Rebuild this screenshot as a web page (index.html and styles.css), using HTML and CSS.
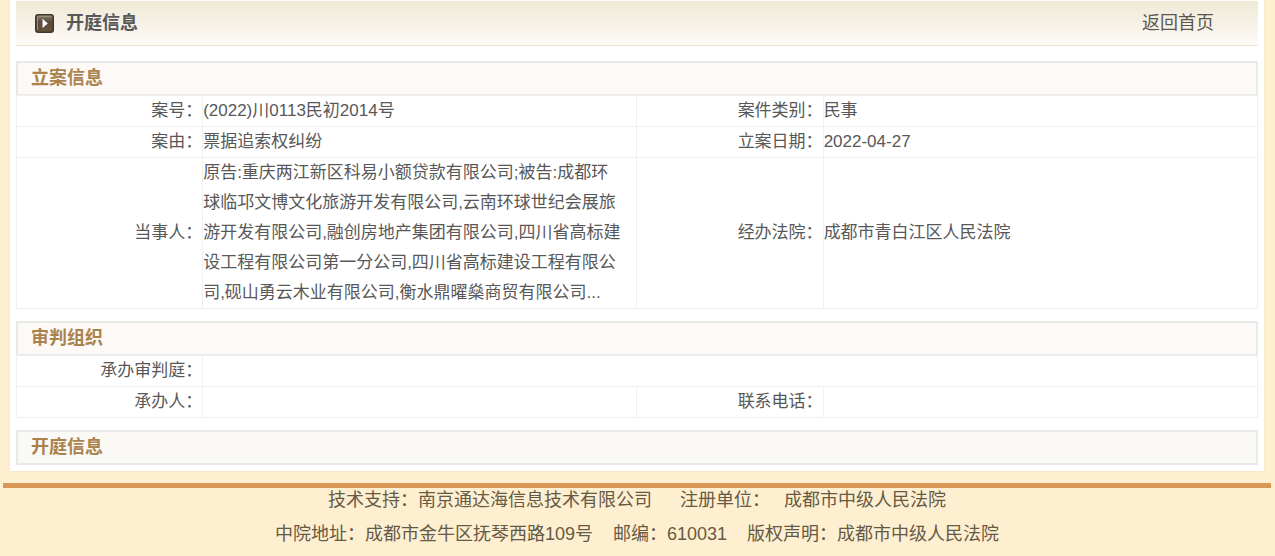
FILE: index.html
```html
<!DOCTYPE html>
<html lang="zh-CN">
<head>
<meta charset="utf-8">
<title>开庭信息</title>
<link rel="stylesheet" href="styles.css">
</head>
<body>
<main class="panel">
  <header class="page-head">
    <svg class="head-icon" width="19" height="19" viewBox="0 0 19 19" aria-hidden="true">
      <defs><linearGradient id="tile" x1="0" y1="0" x2="0" y2="1"><stop offset="0" stop-color="#8d8172"/><stop offset=".4" stop-color="#5c4b3a"/><stop offset="1" stop-color="#67513b"/></linearGradient></defs>
      <rect x=".75" y=".75" width="17.5" height="17.5" rx="2.5" fill="url(#tile)" stroke="#41362b" stroke-width="1.5"/>
      <path d="M2.5 16V3.5Q2.5 2.3 4 2.3H16" fill="none" stroke="#a79c8c" stroke-width=".8"/>
      <path d="M7.5 4.8V14L12.8 9.4Z" fill="#fff"/>
    </svg>
    <h1 class="head-title">开庭信息</h1>
    <a class="home-link" href="#">返回首页</a>
  </header>

  <section class="block">
    <h2 class="block-title">立案信息</h2>
    <table class="info">
      <colgroup><col class="col-label"><col class="col-value"><col class="col-label"><col class="col-value"></colgroup>
      <tr><th scope="row">案号：</th><td>(2022)川0113民初2014号</td><th scope="row">案件类别：</th><td>民事</td></tr>
      <tr><th scope="row">案由：</th><td>票据追索权纠纷</td><th scope="row">立案日期：</th><td>2022-04-27</td></tr>
      <tr>
        <th scope="row">当事人：</th>
        <td>原告:重庆两江新区科易小额贷款有限公司;被告:成都环<br>球临邛文博文化旅游开发有限公司,云南环球世纪会展旅<br>游开发有限公司,融创房地产集团有限公司,四川省高标建<br>设工程有限公司第一分公司,四川省高标建设工程有限公<br>司,砚山勇云木业有限公司,衡水鼎曜燊商贸有限公司...</td>
        <th scope="row">经办法院：</th>
        <td>成都市青白江区人民法院</td>
      </tr>
    </table>
  </section>

  <section class="block">
    <h2 class="block-title">审判组织</h2>
    <table class="info">
      <colgroup><col class="col-label"><col class="col-value"><col class="col-label"><col class="col-value"></colgroup>
      <tr><th scope="row">承办审判庭：</th><td colspan="3"></td></tr>
      <tr><th scope="row">承办人：</th><td></td><th scope="row">联系电话：</th><td></td></tr>
    </table>
  </section>

  <section class="block">
    <h2 class="block-title block-title-plain">开庭信息</h2>
  </section>
</main>

<footer class="footer">
  <p class="footer-line footer-line-first"><span>技术支持：南京通达海信息技术有限公司</span><span>注册单位：<span class="owner">成都市中级人民法院</span></span></p>
  <p class="footer-line"><span>中院地址：成都市金牛区抚琴西路109号</span><span>邮编：610031</span><span>版权声明：成都市中级人民法院</span></p>
</footer>
</body>
</html>
```
FILE: styles.css
```css
* {
  box-sizing: border-box;
}

body {
  margin: 0;
  background: #feefd0;
  color: #585858;
  font-family: "Liberation Sans", "Noto Sans CJK SC", sans-serif;
  font-size: 17px;
  line-height: 30px;
}

.panel {
  margin: 0 11px 0 10px;
  padding: 1px 6px 6px;
  background: #fff;
  box-shadow: 0 0 2px #eadfc0;
}

.page-head {
  display: flex;
  align-items: center;
  height: 45px;
  padding: 0 44px 0 19px;
  border-bottom: 1px solid #ece3c8;
  background: linear-gradient(#efe9d6, #fefaf7);
}

.head-icon {
  margin-top: 1px;
}

.head-title {
  margin: 0 0 0 12px;
  font-size: 18px;
  font-weight: bold;
}

.home-link {
  margin-left: auto;
  color: #5c574c;
  font-size: 18px;
  text-decoration: none;
}

.block {
  margin-top: 12px;
}

.page-head + .block {
  margin-top: 15px;
}

.block-title {
  height: 35px;
  margin: 0;
  padding: 0 13px;
  border: 2px solid #e8eae7;
  background: #fdf9f6;
  color: #aa824d;
  font-size: 18px;
  font-weight: bold;
  line-height: 30px;
}

.block-title-plain {
  background: #fbf9f5;
}

.info {
  width: 100%;
  margin-top: -1px;
  table-layout: fixed;
  border-collapse: collapse;
}

.col-label {
  width: 15%;
}

.col-value {
  width: 35%;
}

.info th,
.info td {
  height: 31px;
  padding: 0;
  border: 1px solid #f0f1ef;
  font-weight: normal;
  text-align: left;
}

.info th {
  text-align: right;
}

.footer {
  margin: 12px 4px 0 3px;
  border-top: 5px solid #d99755;
  color: #665a45;
  font-size: 18px;
}

.footer-line {
  display: flex;
  justify-content: center;
  gap: 20px;
  margin: 0;
  line-height: 35px;
}

.footer-line-first {
  gap: 28px;
  padding-bottom: 5px;
  line-height: 24px;
}

.owner {
  margin-left: 14px;
}
```
